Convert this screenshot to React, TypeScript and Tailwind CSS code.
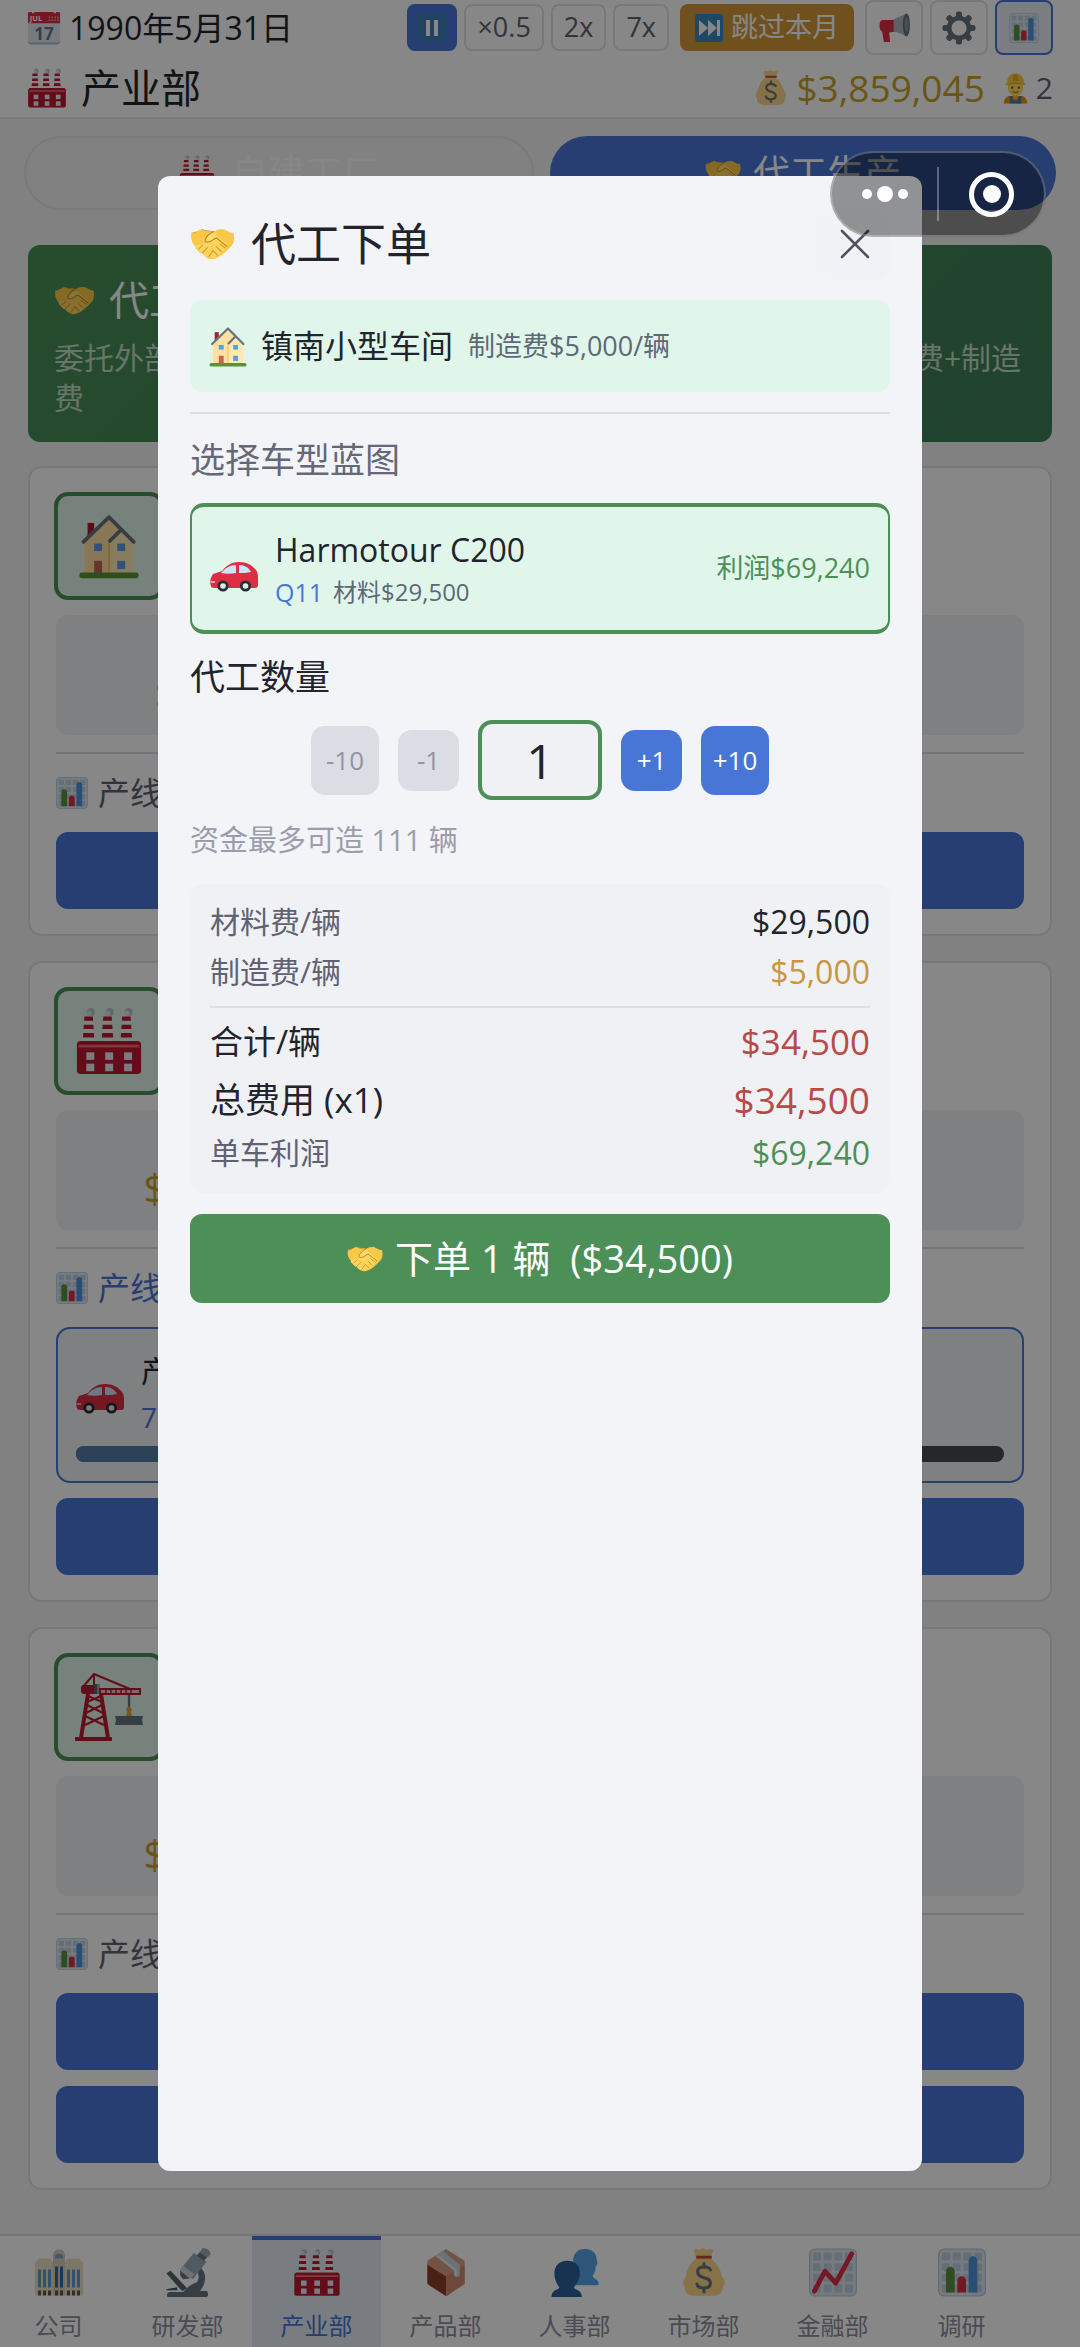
import { useState } from 'react';
import type { ReactNode } from 'react';

type IconProps = { className: string };

const HandshakeIcon = ({ className }: IconProps) => (
  <svg viewBox="0 0 36 26" className={className} aria-hidden="true">
    <path d="M1 4C5 4 7 1 9 1c4 2 7 1 10 2 3-2 5-2 8-2 3 1 4 3 8 3 1 5 1 8-3 12-4 4-8 8-13 9-3 1-7-1-9-4-3-1-5-3-6-6C1 12 0 8 1 4z" fill="#f9c846" />
    <path d="M4 14c-1 3 2 4 3 3-1 3 2 4 3 3 0 3 3 4 5 3 2 2 6 2 6-1 3 1 5-1 4-3 3 0 4-2 3-4 2 0 3-2 2-3L21 8l-8 4z" fill="#ffd45c" />
    <path d="M19 3c-3 1-6 4-7 7 0 2 4 2 7-1l2-1c3 2 6 5 9 7" fill="#ffdc70" stroke="#c98a1e" strokeWidth="1" strokeLinecap="round" />
    <path d="M7 17l3-3M10 20l4-4M15 23l3-4M18 18l4 4M21 15l4 4M24 13l4 3" stroke="#d9982a" strokeWidth="0.9" fill="none" strokeLinecap="round" />
    <path d="M9 1c4 2 7 1 10 2M1 4c1 0 3 0 4-1" stroke="#e0a230" strokeWidth="0.7" fill="none" />
  </svg>
);

const FactoryIcon = ({ className }: IconProps) => (
  <svg viewBox="0 0 36 36" className={className} aria-hidden="true">
    {[5, 15, 25].map((x) => (
      <g key={x}>
        <circle cx={x + 3.4} cy="2.6" r="2.1" fill="#b8c4ca" />
        <circle cx={x + 2.4} cy="3.4" r="1.4" fill="#dde4e8" />
        <path d={`M${x} 5h4.4l1 14h-6.4z`} fill="#f1f3f5" />
        <path d={`M${x} 5h4.4l.2 2.3h-4.8zM${x - 0.3} 9.4h5l.2 2.3h-5.4zM${x - 0.6} 13.800h5.6l.2 2.3h-6z`} fill="#be1931" />
      </g>
    ))}
    <rect x="1" y="18" width="34" height="17.5" rx="2" fill="#be1931" />
    <rect x="2" y="20" width="32" height="1.400" fill="#e8706f" />
    {[6, 16, 26].map((x) => (
      <g key={x} fill="#e6edf5">
        <rect x={x} y="24" width="4.2" height="4" />
        <rect x={x} y="30" width="4.2" height="4" />
      </g>
    ))}
  </svg>
);

const CalendarIcon = ({ className }: IconProps) => (
  <svg viewBox="0 0 36 36" className={className} aria-hidden="true">
    <path d="M1 5h34v27a3.500 3.500 0 0 1-3.500 3.500h-27A3.500 3.500 0 0 1 1 32z" fill="#dfe7ee" />
    <path d="M1 31v1a3.500 3.500 0 0 0 3.500 3.500h27A3.500 3.500 0 0 0 35 32v-1c0 1-1 2-3 2H4c-2 0-3-1-3-2z" fill="#b7c4ce" />
    <path d="M1 3c0-2 1-2 2-2h2c0 2 3 2 3 0h20c0 2 3 2 3 0h2c1 0 2 0 2 2v10H1z" fill="#dd2e44" />
    <g fill="#f4b9c0">
      {[23, 26, 29, 32].map((x) => (
        <g key={x}>
          <rect x={x} y="6" width="1.500" height="1.500" />
          <rect x={x} y="9" width="1.500" height="1.500" />
        </g>
      ))}
    </g>
    <text x="3" y="11" fontSize="8" fontWeight="700" fill="#fff" fontFamily="Open Sans, sans-serif">JUL</text>
    <text x="18" y="30.500" fontSize="18" fontWeight="700" fill="#66757f" textAnchor="middle" fontFamily="Open Sans, sans-serif">17</text>
  </svg>
);

const BarChartIcon = ({ className }: IconProps) => (
  <svg viewBox="0 0 36 36" className={className} aria-hidden="true">
    <rect x="0.500" y="0.500" width="35" height="35" rx="4" fill="#dfe8f1" stroke="#b9cbdc" />
    <g fill="#bfcfdf">
      {[3, 11, 19, 27].map((x) =>
        [3, 11, 19, 27].map((y) => <rect key={`${x}-${y}`} x={x} y={y} width="6" height="6" rx="1" />),
      )}
    </g>
    <path d="M6 33V17a3 3 0 0 1 6.500 0v16z" fill="#5c913b" />
    <path d="M14.500 33v-9a3 3 0 0 1 6.500 0v9z" fill="#dd2e44" />
    <path d="M23 33V9a3 3 0 0 1 6.500 0v24z" fill="#4f93de" />
  </svg>
);

const TrendIcon = ({ className }: IconProps) => (
  <svg viewBox="0 0 36 36" className={className} aria-hidden="true">
    <rect x="0.500" y="0.500" width="35" height="35" rx="4" fill="#dfe8f1" stroke="#b9cbdc" />
    <g fill="#bfcfdf">
      {[3, 11, 19, 27].map((x) =>
        [3, 11, 19, 27].map((y) => <rect key={`${x}-${y}`} x={x} y={y} width="6" height="6" rx="1" />),
      )}
    </g>
    <path d="M4 32l8-15 8 9L32 4" fill="none" stroke="#dd2e44" strokeWidth="3.600" strokeLinecap="round" strokeLinejoin="round" />
  </svg>
);

const MoneyBagIcon = ({ className }: IconProps) => (
  <svg viewBox="0 0 34 38" className={className} aria-hidden="true">
    <path d="M10 1c2-1 3 1 4 0s3-1 4 0 3-1 5 0c2 0 1 2 0 4l-1 3c5 4 8 9 9 14 2 2 3 5 1 7 0 4-3 8-7 8H9c-5 0-7-3-7-7-2-3-1-6 1-8 1-6 4-11 8-14L10 5C9 3 9 2 10 1z" fill="#fdd888" />
    <path d="M11 6h12v2.200H11z" fill="#bf4a32" />
    <path d="M22 17c-1-2-3-2.500-5-2.500-3 0-5 1.500-5 4 0 6 10 3 10 8.500 0 3-2 4-5 4s-5-1-5.500-3M17 12v3M17 31v3" fill="none" stroke="#67757f" strokeWidth="2.400" strokeLinecap="round" />
  </svg>
);

const WorkerIcon = ({ className }: IconProps) => (
  <svg viewBox="0 0 30 36" className={className} aria-hidden="true">
    <path d="M1 36c0-6 3-9 8-9h12c5 0 8 3 8 9z" fill="#f4900c" />
    <path d="M8 27l3 0 1 5h6l1-5h3v9H8z" fill="#3f7fb5" />
    <path d="M12 23h6v5c-2 3-4 3-6 0z" fill="#f5b83d" />
    <path d="M6 12h18v5c0 6-4 10-9 10s-9-4-9-10z" fill="#ffdc5d" />
    <circle cx="11" cy="17" r="1.300" fill="#66471b" />
    <circle cx="19" cy="17" r="1.300" fill="#66471b" />
    <path d="M12 22c2 1 4 1 6 0" stroke="#b5632b" strokeWidth="1.300" fill="none" strokeLinecap="round" />
    <path d="M5 10C5 4 9 0 15 0s10 4 10 10l2 3c-8-2-16-2-24 0z" fill="#ffcc4d" />
    <path d="M12 1h6v8h-6zM3 13c8-3 16-3 24 0v1c-8-2-16-2-24 0z" fill="#f2b022" />
  </svg>
);

const HouseIcon = ({ className }: IconProps) => (
  <svg viewBox="0 0 36 40" className={className} aria-hidden="true">
    <path d="M5 6h4v9H5z" fill="#a0202d" />
    <path d="M3 17L18 3l14 14v20H3z" fill="#ffe0a3" />
    <path d="M18 18l7-7 8 8v18H18z" fill="#ffe8b6" />
    <path d="M18 18v19" stroke="#f2b84b" strokeWidth="0.800" />
    <path d="M2.500 17.500L18 2.500l15 15M18.500 17l6-6" fill="none" stroke="#66757f" strokeWidth="2.200" strokeLinecap="round" strokeLinejoin="round" />
    <g fill="#5c9be0">
      <rect x="9" y="18.500" width="4.800" height="4.500" />
      <rect x="23" y="18.500" width="4.800" height="4.500" />
      <rect x="23" y="29" width="4.800" height="5" />
    </g>
    <rect x="9" y="29" width="4.800" height="8" fill="#c1694f" />
    <rect x="0" y="36" width="36" height="3.600" rx="1.500" fill="#5c913b" />
  </svg>
);

const CarIcon = ({ className }: IconProps) => (
  <svg viewBox="0 0 48 30" className={className} aria-hidden="true">
    <path d="M1 24c-2-4 0-9 2-12 3-1 6-2 9-3 4-5 9-9 17-9 8 0 13 3 17 8 3 4 2 12 2 15 0 2-1 3-3 3H4c-2 0-3-1-3-2z" fill="#dd2e44" />
    <path d="M11 11c4-5 9-8 15-8v8c-5 1-10 1-15 0zM29 3c6 0 9 2 12 7-4 1-8 1-12 1z" fill="#cfe3f8" />
    <path d="M0 19h5v2H1z" fill="#f4a3a8" />
    <circle cx="13" cy="24" r="5.600" fill="#292f33" />
    <circle cx="13" cy="24" r="2.800" fill="#e1e8ed" />
    <circle cx="35.500" cy="24" r="5.600" fill="#292f33" />
    <circle cx="35.500" cy="24" r="2.800" fill="#e1e8ed" />
  </svg>
);

const CraneIcon = ({ className }: IconProps) => (
  <svg viewBox="0 0 68 70" className={className} aria-hidden="true">
    <path d="M7 16L19 2l36 15M19 2v14" fill="none" stroke="#be1931" strokeWidth="2" />
    <rect x="6" y="13" width="16" height="9" rx="3" fill="#be1931" />
    <rect x="19" y="12" width="6" height="10" fill="#9aa7b0" />
    <rect x="19" y="12" width="3" height="10" fill="#55606a" />
    <rect x="25" y="17" width="40" height="5" fill="#e9c9cf" stroke="#be1931" strokeWidth="2" />
    <path d="M31 17v5M36 17v5M41 17v5M46 17v5M51 17v5M56 17v5" stroke="#be1931" strokeWidth="1.500" />
    <path d="M13 22L6 66M26 22l7 44" stroke="#be1931" strokeWidth="4" fill="none" />
    <path d="M13 24l14 6M26 24l-14 6M12 33l16 8M27 33l-16 8M10 44l19 9M29 44l-19 9" stroke="#be1931" strokeWidth="2.200" fill="none" />
    <rect x="0" y="65" width="37" height="4" rx="1" fill="#be1931" />
    <path d="M54 23v14" stroke="#66757f" strokeWidth="2.400" />
    <path d="M54 34l3 3-1 3 1 4h-6l1-4-1-3z" fill="#e5a13a" />
    <path d="M40 44h28l-1 4 1 5H40l1-5z" fill="#66757f" />
  </svg>
);

const OfficeIcon = ({ className }: IconProps) => (
  <svg viewBox="0 0 48 48" className={className} aria-hidden="true">
    <path d="M0 14l4-4h11l3 4v33H0zM30 14l3-4h11l4 4v33H30z" fill="#eadfc4" />
    <path d="M18 6c1-4 3-5 6-5s5 1 6 5v41H18z" fill="#d9ceb4" />
    <path d="M20 7c1-2 7-2 8 0v3h-8z" fill="#6fa9d8" />
    <g fill="#5c9bd6">
      {[3, 8, 13, 32, 37, 42].map((x) => (
        <rect key={x} x={x} y="21" width="3" height="18" />
      ))}
    </g>
    <path d="M20 18h3v21h-3zM25 18h3v21h-3z" fill="#2f6ba4" />
    <g fill="#6b5140">
      {[3, 8, 13, 20, 25, 32, 37, 42].map((x) => (
        <rect key={x} x={x} y="42" width="3" height="5" />
      ))}
    </g>
  </svg>
);

const MicroscopeIcon = ({ className }: IconProps) => (
  <svg viewBox="0 0 44 50" className={className} aria-hidden="true">
    <path d="M35 20c7 7 5 17-1 24h7c2 2 2 5 0 6H1c-1-3 0-5 3-5h13c5-6 9-8 14-10 3-4 2-8 0-12z" fill="#66757f" />
    <path d="M0 26l4-3 17 18-5 3z" fill="#55626b" />
    <path d="M0 42l11-2v3H0z" fill="#4a555d" />
    <path d="M28 5l13 9-14 18-13-10z" fill="#99aab5" />
    <path d="M17 18l12 9-5 4-10-8z" fill="#ccd6dd" />
    <path d="M14 23l10 8-7 1-3-4z" fill="#66757f" />
    <path d="M34 4l3-4c5 0 8 3 8 7l-5 4z" fill="#99aab5" />
    <path d="M34 4l7 6-3 3-7-5z" fill="#66757f" />
  </svg>
);

const PackageIcon = ({ className }: IconProps) => (
  <svg viewBox="0 0 40 50" className={className} aria-hidden="true">
    <path d="M20 1l19 12v24L20 49 1 37V13z" fill="#d99e82" />
    <path d="M1 17l19 12v20L3 38c-1-1-2-2-2-3z" fill="#8a3f29" />
    <path d="M20 29l19-12v19L21 49z" fill="#d08b70" />
    <path d="M9 8l8-5 17 14v11c-2 3-6 2-6-1v-4z" fill="#ccd6dd" />
    <path d="M11 8l19 15v5" stroke="#eef2f5" strokeWidth="2" fill="none" />
  </svg>
);

const PeopleIcon = ({ className }: IconProps) => (
  <svg viewBox="0 0 48 50" className={className} aria-hidden="true">
    <path d="M22 12C23 4 28 1 34 1c7 0 12 4 12 10l1 5-2 3c0 5-1 7-3 9 0 4 7 3 6 10H25z" fill="#55a3e6" />
    <path d="M3 26c0-8 5-13 13-13s13 5 13 12c0 7-3 11-6 15 0 3 8 2 8 10H0c0-8 8-7 8-10-3-4-5-8-5-14z" fill="#2a6299" />
  </svg>
);

const MegaphoneIcon = ({ className }: IconProps) => (
  <svg viewBox="0 0 36 34" className={className} aria-hidden="true">
    <path d="M4 8h14l1 13-7 1 1 11H6L4 21C0 20 0 9 4 8z" fill="#dd2e44" />
    <path d="M17 7L31 1v25l-14-6z" fill="#aab8c2" />
    <ellipse cx="31.500" cy="13.500" rx="4" ry="13" fill="#66757f" />
    <ellipse cx="31.800" cy="13.500" rx="2.200" ry="8" fill="#8899a6" />
  </svg>
);

const GearIcon = ({ className }: IconProps) => (
  <svg viewBox="0 0 36 36" className={className} aria-hidden="true">
    <g fill="#66757f">
      {[0, 45, 90, 135].map((a) => (
        <rect key={a} x="14.800" y="0.500" width="6.400" height="35" rx="2.500" transform={`rotate(${a} 18 18)`} />
      ))}
      <circle cx="18" cy="18" r="13" />
    </g>
    <circle cx="18" cy="18" r="8" fill="#ffffff" />
  </svg>
);

const SkipIcon = ({ className }: IconProps) => (
  <svg viewBox="0 0 28 28" className={className} aria-hidden="true">
    <rect width="28" height="28" rx="3" fill="#3b88c3" />
    <path d="M4 6l9 8-9 8zM13 6l9 8-9 8zM22 6h3v16h-3z" fill="#fff" />
  </svg>
);

const PauseIcon = ({ className }: IconProps) => (
  <svg viewBox="0 0 28 28" className={className} aria-hidden="true">
    <rect width="28" height="28" rx="4" fill="#3b7fb5" />
    <path d="M8 6h4v16H8zM16 6h4v16h-4z" fill="#fff" />
  </svg>
);

const toolButton = 'flex h-[55px] w-[58px] items-center justify-center rounded-lg border-2';
const speedButton = 'flex h-[47px] items-center justify-center rounded-lg border-2 border-[#e2e3e8] px-[11px] text-[27px] text-[#5f6272]';

function Header() {
  return (
    <header className="border-b-2 border-[#e6e7ec] bg-white px-[27px]">
      <div className="flex h-[55px] items-center justify-between">
        <div className="flex items-center gap-2 text-[32px] leading-[40px]">
          <CalendarIcon className="h-[34px] w-[34px]" />
          <span>1990年5月31日</span>
        </div>
        <div className="flex items-center gap-[11px]">
          <div className="flex items-center gap-[7px]">
            <button type="button" aria-label="暂停" className="flex h-[47px] w-[50px] items-center justify-center rounded-lg bg-[#4876d6]">
              <PauseIcon className="h-7 w-7" />
            </button>
            <button type="button" className={speedButton}>×0.5</button>
            <button type="button" className={speedButton}>2x</button>
            <button type="button" className={speedButton}>7x</button>
          </div>
          <button type="button" className="flex h-[47px] items-center gap-2 rounded-lg bg-[#d4993a] px-[15px] text-[27px] text-white">
            <SkipIcon className="h-7 w-7" />
            <span>跳过本月</span>
          </button>
          <div className="flex items-center gap-[7px]">
            <button type="button" aria-label="公告" className={`${toolButton} border-[#e2e3e8]`}>
              <MegaphoneIcon className="h-[30px] w-[33px]" />
            </button>
            <button type="button" aria-label="设置" className={`${toolButton} border-[#e2e3e8]`}>
              <GearIcon className="h-[34px] w-[34px]" />
            </button>
            <button type="button" aria-label="统计" className={`${toolButton} border-[#4876d6] bg-[#e6eef7]`}>
              <BarChartIcon className="h-[32px] w-[30px]" />
            </button>
          </div>
        </div>
      </div>
      <div className="flex h-[62px] items-center justify-between pt-1">
        <h1 className="flex items-center gap-[14px] text-[40px] leading-[50px]">
          <FactoryIcon className="h-[42px] w-[40px]" />
          产业部
        </h1>
        <div className="flex items-center gap-[18px]">
          <div className="flex items-center gap-[9px] text-[37px] leading-[44px] text-[#c9a227]">
            <MoneyBagIcon className="h-[36px] w-[32px]" />
            <span>$3,859,045</span>
          </div>
          <div className="flex items-center gap-2 text-[30px] leading-[44px] text-[#5f6272]">
            <WorkerIcon className="h-[31px] w-[25px]" />
            <span>2</span>
          </div>
        </div>
      </div>
    </header>
  );
}

type FactoryProps = {
  icon: ReactNode;
  name: string;
  cost: string;
  orders: number;
  running?: boolean;
};

function FactoryCard({ icon, name, cost, orders, running = false }: FactoryProps) {
  return (
    <article aria-label={name} className="rounded-[14px] border-2 border-[#dbe7df] bg-white px-[26px] pt-6 pb-[25px]">
      <div className="-ml-0.5 flex h-[108px] w-[110px] items-center justify-center rounded-[14px] border-4 border-[#4c9057] bg-[#e0f6ea]">
        {icon}
      </div>
      <div className="mt-[15px] grid h-[120px] grid-cols-3 items-center rounded-xl bg-[#eff1f4] pt-9 text-center">
        <span className="text-[40px] leading-[48px] text-[#c9a227]">{cost}</span>
      </div>
      <hr className="mt-[17px] border-t-2 border-[#dcdee3]" />
      <div className={`mt-[22px] flex h-[34px] items-center gap-[10px] text-[32px] leading-[34px] ${running ? 'text-[#4876d6]' : 'text-[#5f6272]'}`}>
        <BarChartIcon className="h-[32px] w-[32px]" />
        <span>产线</span>
      </div>
      {running && (
        <div className="mt-[22px] h-[156px] rounded-[14px] border-2 border-[#4876d6] bg-[#eff1f4] px-[18px] pt-[18px]">
          <div className="flex items-center gap-[17px]">
            <CarIcon className="mt-3 h-[30px] w-[48px]" />
            <div>
              <div className="text-[30px] leading-[48px]">产线</div>
              <div className="text-[28px] leading-[44px] text-[#4876d6]">73%</div>
            </div>
          </div>
          <div className="mt-[7px] h-4 overflow-hidden rounded-full bg-[#484a52]">
            <div className="h-full w-[73%] bg-[#537da6]" />
          </div>
        </div>
      )}
      <div className={`flex flex-col gap-4 ${running ? 'mt-[15px]' : 'mt-[22px]'}`}>
        {Array.from({ length: orders }, (_, i) => (
          <button key={i} type="button" aria-label={`${name} ${i + 1}`} className="h-[77px] rounded-xl bg-[#4876d6]" />
        ))}
      </div>
    </article>
  );
}

const tabs = [
  { label: '公司', Icon: OfficeIcon },
  { label: '研发部', Icon: MicroscopeIcon },
  { label: '产业部', Icon: FactoryIcon },
  { label: '产品部', Icon: PackageIcon },
  { label: '人事部', Icon: PeopleIcon },
  { label: '市场部', Icon: MoneyBagIcon },
  { label: '金融部', Icon: TrendIcon },
  { label: '调研', Icon: BarChartIcon },
];

function BottomNav() {
  return (
    <nav className="mt-auto h-[113px] overflow-hidden border-t-2 border-[#dcdee6] bg-white">
      <div className="-ml-1.5 flex h-full">
        {tabs.map(({ label, Icon }) => {
          const active = label === '产业部';
          return (
            <a
              key={label}
              href="#"
              className={`flex w-[129px] shrink-0 flex-col items-center gap-[13px] border-t-4 pt-2 text-[24px] leading-[32px] ${
                active ? 'border-[#4876d6] bg-[#e4ecf4] text-[#4876d6]' : 'border-transparent text-[#8d8f9d]'
              }`}
            >
              <Icon className="h-[49px] w-[48px]" />
              <span>{label}</span>
            </a>
          );
        })}
      </div>
    </nav>
  );
}

function OrderDialog() {
  const [count, setCount] = useState(1);
  const change = (delta: number) => setCount((c) => Math.min(111, Math.max(1, c + delta)));
  const total = `$${(34500 * count).toLocaleString('en-US')}`;
  const minus = 'bg-[#dadde4] text-[#9294a3]';
  const plus = 'bg-[#4876d6] text-white';

  return (
    <section role="dialog" aria-labelledby="order-title" className="h-[85vh] w-full overflow-hidden rounded-xl bg-[#f2f4f8] p-8">
      <div className="flex h-[72px] items-center justify-between">
        <h2 id="order-title" className="flex items-center gap-4 text-[45px] leading-[60px]">
          <HandshakeIcon className="h-[32px] w-[45px]" />
          代工下单
        </h2>
        <button type="button" aria-label="关闭" className="flex h-[72px] w-[70px] items-center justify-center rounded-xl bg-[#f1f2f6]">
          <svg viewBox="0 0 30 30" className="h-[30px] w-[30px]" aria-hidden="true">
            <path d="M2 2l26 26M28 2L2 28" stroke="#50525f" strokeWidth="2.600" strokeLinecap="round" />
          </svg>
        </button>
      </div>

      <div className="mt-5 flex h-[92px] items-center rounded-xl bg-[#e0f6ea] px-[19px]">
        <HouseIcon className="h-[41px] w-[38px]" />
        <span className="ml-[14px] text-[32px] leading-[48px]">镇南小型车间</span>
        <span className="ml-[15px] text-[27px] leading-[48px] text-[#5f6875]">制造费$5,000/辆</span>
      </div>

      <hr className="mt-5 border-t-2 border-[#dcdee3]" />
      <h3 className="mt-[22px] text-[35px] leading-[48px] text-[#666878]">选择车型蓝图</h3>

      <button type="button" aria-pressed="true" className="mt-[19px] flex h-[131px] w-full items-center rounded-[14px] border-x-2 border-y-4 border-[#4c9057] bg-[#e0f6ea] px-[18px] text-left">
        <CarIcon className="mt-4 h-[30px] w-[48px]" />
        <span className="ml-[17px] flex grow flex-col">
          <span className="text-[32px] leading-[46px]">Harmotour C200</span>
          <span className="flex items-center gap-[10px] leading-[38px]">
            <span className="text-[25px] text-[#4876d6]">Q11</span>
            <span className="text-[24px] text-[#5f6875]">材料$29,500</span>
          </span>
        </span>
        <span className="text-[27px] text-[#4c9057]">利润$69,240</span>
      </button>

      <label htmlFor="order-count" className="mt-[19px] block text-[35px] leading-[48px]">代工数量</label>
      <div className="mt-[19px] flex items-center justify-center gap-[19px] text-[26px]">
        <button type="button" onClick={() => change(-10)} className={`h-[69px] w-[68px] rounded-[14px] ${minus}`}>-10</button>
        <button type="button" onClick={() => change(-1)} className={`h-[61px] w-[61px] rounded-[14px] ${minus}`}>-1</button>
        <input
          id="order-count"
          inputMode="numeric"
          value={count}
          onChange={(e) => setCount(Math.min(111, Math.max(1, Number(e.target.value) || 1)))}
          className="h-20 w-[124px] rounded-[14px] border-4 border-[#4c9057] bg-[#f0f1f5] text-center text-[48px] outline-none"
        />
        <button type="button" onClick={() => change(1)} className={`h-[61px] w-[61px] rounded-[14px] ${plus}`}>+1</button>
        <button type="button" onClick={() => change(10)} className={`h-[69px] w-[68px] rounded-[14px] ${plus}`}>+10</button>
      </div>
      <p className="mt-5 text-[29px] leading-[40px] text-[#9b9dab]">资金最多可造 111 辆</p>

      <dl className="mt-6 rounded-xl bg-[#f0f1f5] px-5 pt-4 pb-[18px] text-[30px] leading-[44px]">
        <div className="flex justify-between">
          <dt className="text-[#5f6272]">材料费/辆</dt>
          <dd className="text-[32px]">$29,500</dd>
        </div>
        <div className="mt-1.5 flex justify-between border-b-2 border-[#dcdee3] pb-3">
          <dt className="text-[#5f6272]">制造费/辆</dt>
          <dd className="text-[32px] text-[#c99642]">$5,000</dd>
        </div>
        <div className="mt-3 flex justify-between">
          <dt className="text-[33px]">合计/辆</dt>
          <dd className="text-[35px] text-[#b94a48]">$34,500</dd>
        </div>
        <div className="mt-[11px] flex justify-between leading-[50px]">
          <dt className="text-[35px]">总费用 (x{count})</dt>
          <dd className="text-[37px] text-[#b94a48]">{total}</dd>
        </div>
        <div className="mt-1.5 flex justify-between">
          <dt className="text-[#5f6272]">单车利润</dt>
          <dd className="text-[32px] text-[#4c9057]">$69,240</dd>
        </div>
      </dl>

      <button type="button" className="mt-[21px] flex h-[89px] w-full items-center justify-center gap-3 rounded-xl bg-[#4c9057] text-[38px] text-white">
        <HandshakeIcon className="h-[26px] w-[36px]" />
        <span className="whitespace-pre">下单 {count} 辆  ({total})</span>
      </button>
    </section>
  );
}

export default function App() {
  return (
    <div className="flex min-h-screen w-full flex-col bg-[#f3f3f6] font-['Open_Sans','Noto_Sans_CJK_SC',sans-serif] text-[#22242c]">
      <Header />
      <div className="flex gap-4 px-6 pt-[17px]">
        <button type="button" className="flex h-[74px] flex-1 items-center justify-center gap-4 rounded-full border-2 border-[#e6e7ec] text-[37px] text-[#fdfdff]">
          <FactoryIcon className="h-[38px] w-[36px]" />
          自建工厂
        </button>
        <button type="button" className="flex h-[74px] flex-1 items-center justify-center gap-3 rounded-full bg-[#4876d6] text-[37px] text-white">
          <HandshakeIcon className="h-[26px] w-[36px]" />
          代工生产
        </button>
      </div>

      <main className="flex flex-col px-7 pt-[35px] pb-6">
        <section className="rounded-xl bg-linear-135 from-[#4a8f55] to-[#3e7e59] px-[26px] pt-[29px] pb-6 text-white">
          <h2 className="flex items-center gap-[14px] text-[40px] leading-[52px]">
            <HandshakeIcon className="h-[29px] w-[41px]" />
            代工
          </h2>
          <p className="mt-3 text-[30px] leading-[40px] text-[#c4dcc9]">
            委托外部代工厂生产汽车，无需自建工厂，每1辆支付费用 = 材料费+制造费
          </p>
        </section>
        <div className="mt-6 flex flex-col gap-[25px]">
          <FactoryCard icon={<HouseIcon className="h-[66px] w-[60px]" />} name="镇南小型车间" cost="$5,000" orders={1} />
          <FactoryCard icon={<FactoryIcon className="h-[70px] w-[68px]" />} name="中型代工厂" cost="$10,000" orders={1} running />
          <FactoryCard icon={<CraneIcon className="h-[70px] w-[68px]" />} name="大型代工厂" cost="$20,000" orders={2} />
        </div>
      </main>
      <BottomNav />

      <div className="fixed inset-0 flex items-center bg-black/47 px-[158px]">
        <OrderDialog />
      </div>

      <div className="fixed top-[151px] right-[34px] flex h-[86px] w-[216px] items-center rounded-full border-2 border-white/25 bg-black/40">
        <button type="button" aria-label="更多" className="flex h-full flex-1 items-center justify-center gap-[5px]">
          <span className="h-[10px] w-[10px] rounded-full bg-white" />
          <span className="h-4 w-4 rounded-full bg-white" />
          <span className="h-[10px] w-[10px] rounded-full bg-white" />
        </button>
        <span className="h-[54px] w-0.5 bg-white/30" />
        <button type="button" aria-label="退出" className="flex h-full flex-1 items-center justify-center">
          <span className="flex h-[45px] w-[45px] items-center justify-center rounded-full border-[5px] border-white">
            <span className="h-[18px] w-[18px] rounded-full bg-white" />
          </span>
        </button>
      </div>
    </div>
  );
}
